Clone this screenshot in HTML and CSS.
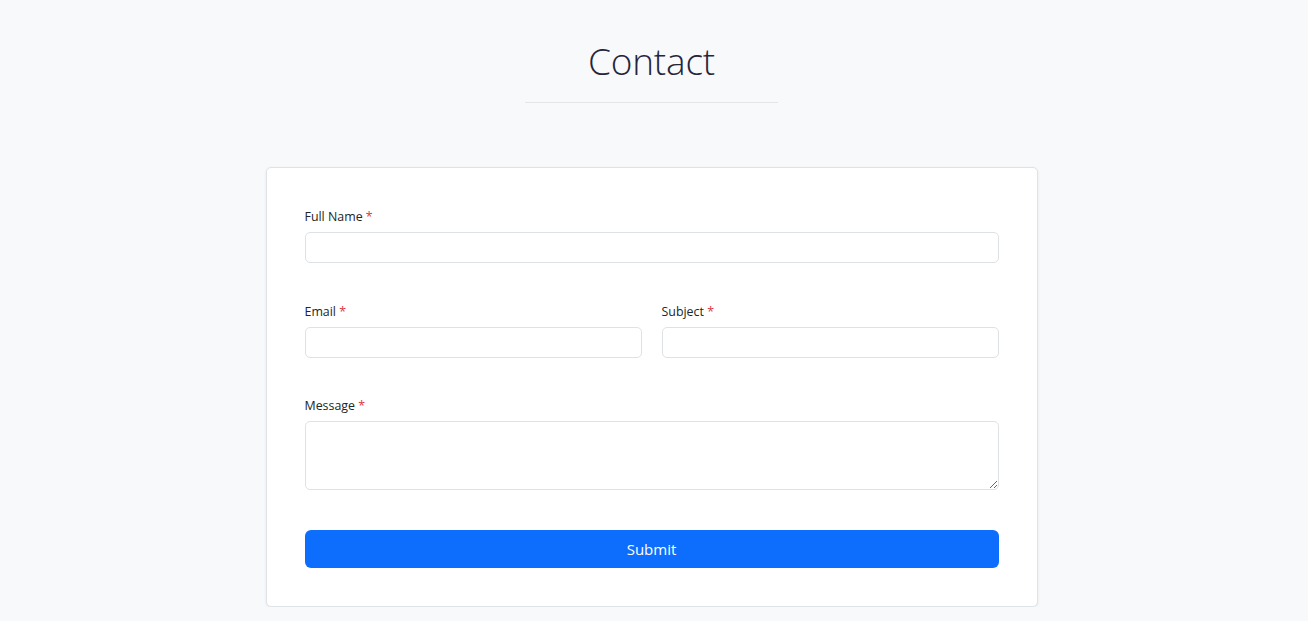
FILE: index.html
```html
<!DOCTYPE html>
<html lang="en">
<head>
<meta charset="utf-8">
<title>Contact</title>
<link rel="stylesheet" href="styles.css">
</head>
<body>
<main class="page">
  <header class="page-head">
    <h1 class="title">Contact</h1>
    <div class="divider"></div>
  </header>
  <form class="card">
    <div class="group">
      <label class="label">Full Name <span class="req">*</span></label>
      <input class="input" type="text">
    </div>
    <div class="row">
      <div class="group">
        <label class="label">Email <span class="req">*</span></label>
        <input class="input" type="email">
      </div>
      <div class="group">
        <label class="label">Subject <span class="req">*</span></label>
        <input class="input" type="text">
      </div>
    </div>
    <div class="group">
      <label class="label">Message <span class="req">*</span></label>
      <textarea class="input textarea"></textarea>
    </div>
    <button class="submit" type="button">Submit</button>
  </form>
</main>
</body>
</html>
```
FILE: styles.css
```css
* { box-sizing: border-box; }
html, body { margin: 0; padding: 0; }
body {
  background: #f8f9fa;
  font-family: "Open Sans", "Noto Sans", "Liberation Sans", sans-serif;
  color: #212529;
}
.page {
  display: flex;
  flex-direction: column;
  align-items: center;
  padding: 0 5px 0 0;
}
.page-head {
  display: flex;
  flex-direction: column;
  align-items: center;
  padding-top: 36px;
}
.title {
  margin: 0;
  font-size: 37px;
  font-weight: 300;
  line-height: 50px;
  color: #25253a;
  letter-spacing: -0.2px;
}
.divider {
  width: 253px;
  height: 1px;
  background: #e3e5e8;
  margin-top: 16px;
}
.card {
  margin-top: 64px;
  width: 772px;
  background: #fff;
  border: 1px solid #dfe2e6;
  border-radius: 5px;
  box-shadow: 0 1px 3px rgba(0,0,0,0.07);
  padding: 40px 38px 38px;
  display: flex;
  flex-direction: column;
  gap: 39.5px;
}
.row {
  display: grid;
  grid-template-columns: 1fr 1fr;
  gap: 20px;
}
.group {
  display: flex;
  flex-direction: column;
}
.label {
  font-size: 12.4px;
  line-height: 18px;
  margin-bottom: 6px;
  color: #212529;
}
.req { color: #dc3545; }
.input {
  display: block;
  width: 100%;
  height: 31px;
  border: 1px solid #dee2e6;
  border-radius: 5px;
  background: #fff;
  font: inherit;
  padding: 4px 10px;
}
.textarea {
  height: 69px;
  resize: vertical;
}
.submit {
  height: 38px;
  border: 0;
  border-radius: 6px;
  background: #0d6efd;
  color: #fff;
  font-family: inherit;
  font-size: 15px;
  cursor: pointer;
}
```
